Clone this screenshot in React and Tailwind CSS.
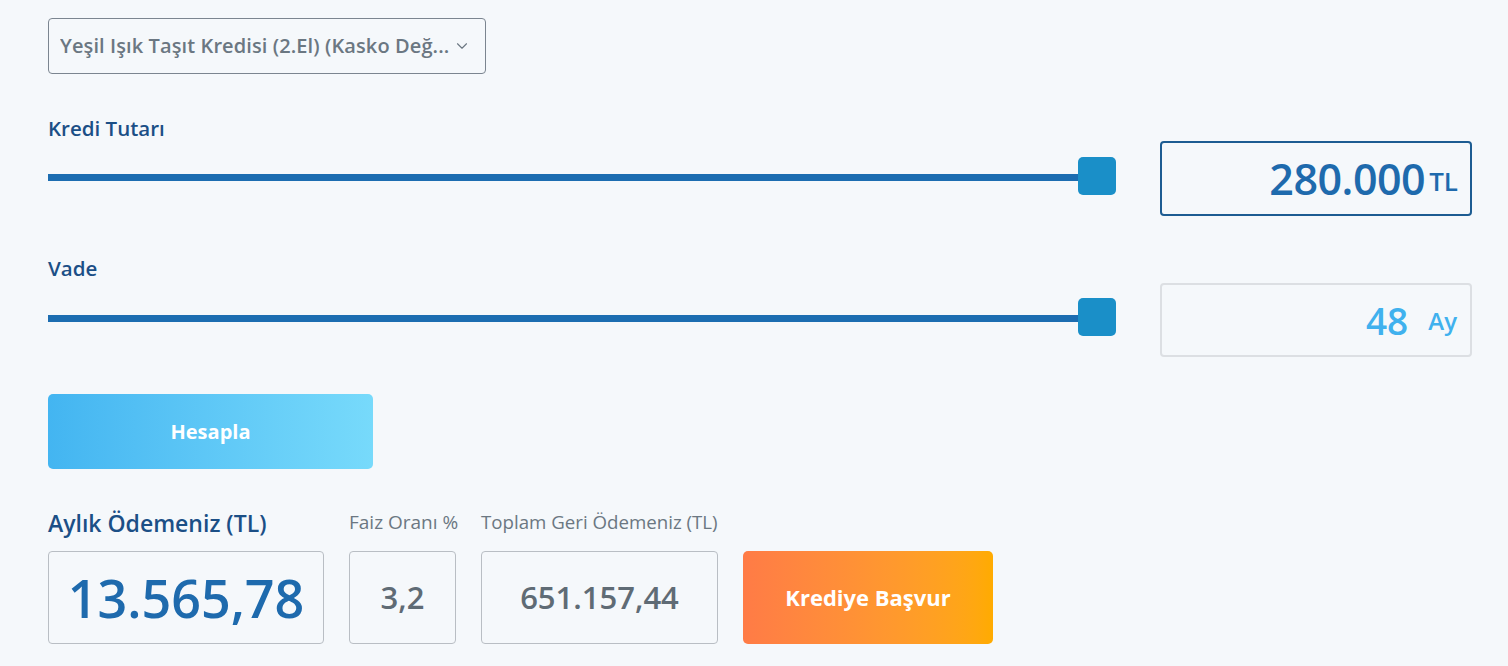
import React, { useState } from 'react';
import { ChevronDown } from 'lucide-react';

const FONT = { fontFamily: '"Open Sans", Lato, sans-serif' };

function Slider({ value, min, max, thumbTop }) {
  const pct = ((value - min) / (max - min)) * 100;
  return (
    <div className="relative h-full flex-1">
      <div className="absolute left-0 right-0 h-[7px] bg-[#1c6db1]" style={{ top: thumbTop + 17 }} />
      <div
        className="absolute h-[38px] w-[38px] -translate-x-full rounded-[5px] bg-[#1a8fc8]"
        style={{ left: `${pct}%`, top: thumbTop }}
      />
    </div>
  );
}

export default function App() {
  const [amount] = useState(280000);
  const [term] = useState(48);

  return (
    <div className="min-h-[666px] w-full bg-[#f5f8fb] pl-12 pr-[36px] pt-[18px]" style={FONT}>
      <button
        type="button"
        className="flex h-[56px] w-[438px] items-center justify-between rounded-[4px] border border-[#7b8590] pl-[11px] pr-[14px] text-[20px] font-semibold tracking-[0.1px] text-[#6b7782]"
      >
        <span className="truncate">Yeşil Işık Taşıt Kredisi (2.El) (Kasko Değ...</span>
        <ChevronDown size={18} strokeWidth={1.5} className="ml-[3px] shrink-0 text-[#6b7782]" />
      </button>

      <div className="mt-[42px] text-[20.5px] font-semibold leading-[24px] text-[#1b4f86]">Kredi Tutarı</div>
      <div className="mt-px flex h-[75px] gap-[44px]">
        <Slider value={amount} min={10000} max={280000} thumbTop={16} />
        <div className="flex h-[75px] w-[312px] items-center justify-end rounded-[4px] border-2 border-[#1d5c92] pr-[12px] text-[#1e6aad]">
          <span className="text-[43px] font-semibold leading-none tracking-[-0.5px]">280.000</span>
          <span className="ml-[4px] mt-[4px] text-[26px] font-semibold leading-none">TL</span>
        </div>
      </div>

      <div className="mt-[40px] text-[20.5px] font-semibold leading-[24px] text-[#1b4f86]">Vade</div>
      <div className="mt-[3px] flex h-[74px] gap-[44px]">
        <Slider value={term} min={12} max={48} thumbTop={15} />
        <div className="flex h-[74px] w-[312px] items-center justify-end rounded-[4px] border-2 border-[#dcdfe3] pr-[13px] text-[#40b1ee]">
          <span className="text-[37px] font-semibold leading-none">48</span>
          <span className="ml-[20px] mt-[2px] text-[24px] font-semibold leading-none">Ay</span>
        </div>
      </div>

      <button
        type="button"
        className="mt-[37px] flex h-[75px] w-[325px] items-center justify-center rounded-[5px] bg-gradient-to-r from-[#43b5f1] to-[#77dafb] text-[20px] font-bold text-white"
      >
        Hesapla
      </button>

      <div className="mt-[40px] flex items-end gap-[25px]">
        <div className="flex w-[276px] flex-col">
          <span className="whitespace-nowrap text-[23px] font-semibold leading-[28px] text-[#1b4f86]">Aylık Ödemeniz (TL)</span>
          <div className="mt-[14px] flex h-[93px] w-[276px] items-center justify-center rounded-[4px] border border-[#b9bec4] text-[52px] font-semibold text-[#1e6aad]">
            13.565,78
          </div>
        </div>
        <div className="flex w-[107px] flex-col">
          <span className="whitespace-nowrap text-[19px] leading-[24px] text-[#6b7782]">Faiz Oranı %</span>
          <div className="mt-[17px] flex h-[93px] w-[107px] items-center justify-center rounded-[4px] border border-[#b9bec4] text-[31px] font-semibold text-[#5f6b75]">
            3,2
          </div>
        </div>
        <div className="flex w-[237px] flex-col">
          <span className="whitespace-nowrap text-[18.7px] leading-[24px] text-[#6b7782]">Toplam Geri Ödemeniz (TL)</span>
          <div className="mt-[17px] flex h-[93px] w-[237px] items-center justify-center rounded-[4px] border border-[#b9bec4] text-[31px] font-semibold text-[#5f6b75]">
            651.157,44
          </div>
        </div>
        <button
          type="button"
          className="flex h-[93px] w-[250px] items-center justify-center rounded-[5px] bg-gradient-to-r from-[#ff7b46] to-[#ffab00] text-[22px] font-bold text-white"
        >
          Krediye Başvur
        </button>
      </div>
    </div>
  );
}
